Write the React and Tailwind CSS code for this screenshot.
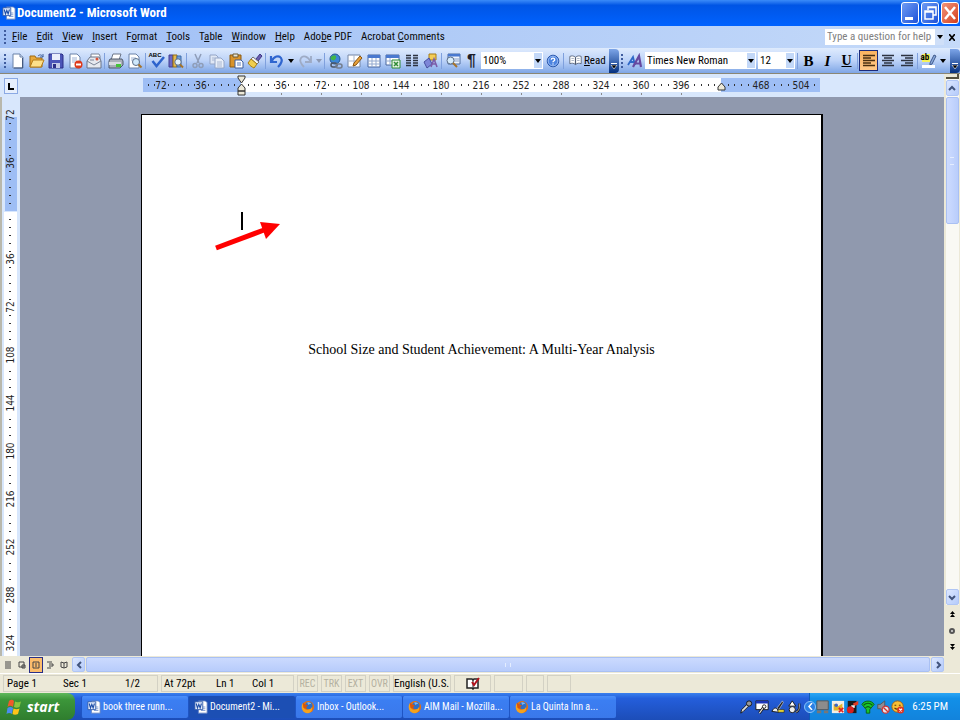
import React from "react";

const SANS = "font-['Roboto_Condensed','Roboto','Liberation_Sans',sans-serif]";

function Svg({ children, size = 16 }) {
  return (
    <svg width={size} height={size} viewBox="0 0 16 16" fill="none" aria-hidden="true" className="shrink-0">
      {children}
    </svg>
  );
}

const sheet = <path d="M3 1h7l3 3v11H3z" fill="#fff" stroke="#6b82a8" />;

const icons = {
  blank: <>{sheet}<path d="M10 1v3h3" stroke="#6b82a8" fill="#cfdcf2" /><path d="M12.500 5v10H4" stroke="#44597e" /></>,
  open: <><path d="M1 3h5l1 2h6v9H1z" fill="#e9a93a" stroke="#a06a10" /><path d="M4 7h11l-3 7H1z" fill="#fde08a" stroke="#b57c18" /><path d="M9 3c2-2 4-1 5 1m0-3v3h-3" stroke="#3c5e9c" /></>,
  save: <><path d="M1 1h13l1 1v13H1z" fill="#4b55b8" stroke="#2c2f86" /><path d="M4 1h8v6H4z" fill="#e9edfb" /><path d="M4 10h8v5H4z" fill="#c4cbe8" /><path d="M5 11h3v4H5z" fill="#2c2f86" /></>,
  permission: <>{sheet}<path d="M5 5h5M5 7h5M5 9h3" stroke="#9fb2d4" /><circle cx="11.500" cy="11.500" r="4" fill="#dd3a1c" /><path d="M9 11.500h5" stroke="#fff" strokeWidth="2" /></>,
  mail: <><path d="M5 1h8l1 2v6H5z" fill="#fff" stroke="#7c8698" /><path d="M1 8l3-4h9l2 4v7H1z" fill="#e6e9ef" stroke="#6a7488" /><path d="M1 8l7 4 7-4M4 7h4" stroke="#7c8698" /><circle cx="11" cy="6" r="1.500" fill="#d9533a" /></>,
  print: <><path d="M5 1h8l-2 6H3z" fill="#fff" stroke="#6b7587" /><path d="M2 6h12l1 2v4l-3 3H1V8z" fill="#aab0ba" stroke="#505a6c" /><path d="M1 9h12v3H1z" fill="#d8dbe0" /><path d="M8 11h5v3H8z" fill="#43c33a" /></>,
  preview: <><path d="M2 1h7l3 3v11H2z" fill="#fff" stroke="#6b82a8" /><path d="M4 5h5M4 7h4" stroke="#9fb2d4" /><circle cx="9" cy="9" r="3.500" fill="#cfe8fb" stroke="#5d6f88" /><path d="M11.500 11.500l3 3" stroke="#a6742a" strokeWidth="2" /></>,
  spelling: <><path d="M3.500 8l4 5L15 4" stroke="#2d63cc" strokeWidth="2.500" /></>,
  research: <><path d="M1 2h4v12H1z" fill="#6c68c4" stroke="#413d91" /><path d="M5 2h4v12H5z" fill="#e5b94d" stroke="#906a14" /><path d="M9 3h4v11H9z" fill="#70a0dc" stroke="#3b6aa8" /><circle cx="10" cy="9" r="3.200" fill="#e2f1fc" stroke="#5d6f88" /><path d="M12 11.500l3 3" stroke="#a6742a" strokeWidth="2" /></>,
  cut: <><path d="M5 1l4 9M11 1L7 10" stroke="#8f9db8" strokeWidth="1.500" /><circle cx="5" cy="12.500" r="2" stroke="#8f9db8" strokeWidth="1.500" /><circle cx="11" cy="12.500" r="2" stroke="#8f9db8" strokeWidth="1.500" /></>,
  copy: <><path d="M1 2h6l2 2v7H1z" fill="#dfe7f5" stroke="#94a5c6" /><path d="M6 5h6l3 3v7H6z" fill="#e9eff9" stroke="#94a5c6" /><path d="M8 9h5M8 11h5M8 13h5M3 5h3M3 7h3" stroke="#a8b6d1" /></>,
  paste: <><path d="M2 2h11v12H2z" fill="#d9932a" stroke="#8b5a10" /><path d="M5 1h5v3H5z" fill="#e9e4d3" stroke="#6d5a33" /><path d="M7 7h6l2 2v6H7z" fill="#fff" stroke="#3e5f9d" /><path d="M9 10h4M9 12h4" stroke="#5d7fbd" /></>,
  painter: <><path d="M9 6l4-5 2 2-4 5z" fill="#6a5fb0" stroke="#3f3684" /><path d="M6 4l6 5-2 2-6-5z" fill="#f4f4f4" stroke="#747474" /><path d="M4 6l6 5-3 4c-2-1-4-2-6-5z" fill="#f0ce4e" stroke="#a67d12" /></>,
  undo: <path d="M2 3v6h6M2.500 8.500C5 3 10 2 12 5c2 3 0 6-3 9" stroke="#2f65cf" strokeWidth="2.200" />,
  redo: <path d="M14 3v6H8M13.500 8.500C11 3 6 2 4 5c-2 3 0 6 3 9" stroke="#9eabc5" strokeWidth="1.800" />,
  link: <><circle cx="7" cy="6" r="5" fill="#3c86d8" stroke="#23598e" /><path d="M4 3c3-2 5 0 4 2s-2 3-4 2-2-3 0-4z" fill="#41b548" /><rect x="3" y="10" width="6" height="4" rx="2" stroke="#4d5664" strokeWidth="1.500" /><rect x="8" y="11" width="6" height="4" rx="2" stroke="#747e8e" strokeWidth="1.500" /></>,
  borders: <><path d="M1 2h12v12H1z" fill="#fff" stroke="#7586a5" /><path d="M7 2v12M1 8h12" stroke="#a7b4cc" /><path d="M6 13l1-3 6-7 2 2-6 7z" fill="#e9a23b" stroke="#8a5510" /></>,
  table: <><path d="M2 2h12v12H2z" fill="#fff" stroke="#49679f" /><path d="M2 2h12v3H2z" fill="#4a79cf" /><path d="M2 8h12M2 11h12M6 5v9M10 5v9" stroke="#93a9cf" /></>,
  excel: <><path d="M1 2h13v10H1z" fill="#fff" stroke="#49679f" /><path d="M1 2h13v3H1z" fill="#4a79cf" /><path d="M1 8h13M5 5v7" stroke="#93a9cf" /><path d="M7 7h8v8H7z" fill="#e7f5e4" stroke="#2f8a34" /><path d="M9 9l4 4M13 9l-4 4" stroke="#2f8a34" strokeWidth="1.500" /></>,
  columns: <path d="M2 2.500h5M2 5h5M2 7.500h5M2 10h5M2 12.500h5M9 2.500h5M9 5h5M9 7.500h5M9 10h5M9 12.500h5" stroke="#2d3340" strokeWidth="1.600" />,
  drawing: <><path d="M6 1h7v6H6z" fill="#f4cd56" stroke="#a57c18" /><path d="M1 9l5-4 3 6-5 4z" fill="#7d86d8" stroke="#474f9e" /><path d="M8 14l3-8 3 8M9 11h4" stroke="#7b5ca8" strokeWidth="1.600" /></>,
  docmap: <><path d="M3 1h12v10H3z" fill="#eef4fd" stroke="#4e6c9e" /><path d="M3 1h12v2.500H3z" fill="#4a79cf" /><path d="M9 6h5M9 8h5" stroke="#8aa1c9" /><circle cx="5.500" cy="7.500" r="3.500" fill="#d7ecfb" stroke="#5d6f88" /><path d="M8 10l4 4" stroke="#a6742a" strokeWidth="2" /></>,
  help: <><circle cx="8" cy="8" r="5.800" fill="#4d84e0" stroke="#2a57ab" /><circle cx="8" cy="8" r="4.800" stroke="#a9c6f5" strokeWidth=".8" /><path d="M6.300 6.800c0-2.300 3.400-2.300 3.400 0 0 1.200-1.700 1.200-1.700 2.400M8 10.500v1" stroke="#fff" strokeWidth="1.400" /></>,
  read: <><path d="M8 4C6 2 3 2 1 3v9c2-1 5-1 7 1 2-2 5-2 7-1V3c-2-1-5-1-7 1z" fill="#fff" stroke="#4e5a70" /><path d="M8 4v9" stroke="#4e5a70" strokeWidth="1.500" /><path d="M3 5.500h3M3 8h3M13 5.500h-3M13 8h-3" stroke="#9aa5ba" /></>,
  styles: <><path d="M1 12L6 4l2 8M3 9h4" stroke="#2f69c8" strokeWidth="1.800" /><path d="M6 14l6-11 2 11M8 10.500h5" stroke="#67489f" strokeWidth="2.200" /></>,
  left: <path d="M2 2.500h12M2 5h8M2 7.500h12M2 10h8M2 12.500h12" stroke="#4a2f10" strokeWidth="1.400" />,
  center: <path d="M2 2.500h12M4 5h8M2 7.500h12M4 10h8M2 12.500h12" stroke="#2d3340" strokeWidth="1.400" />,
  right: <path d="M2 2.500h12M6 5h8M2 7.500h12M6 10h8M2 12.500h12" stroke="#2d3340" strokeWidth="1.400" />,
  highlight: <><path d="M1 1h8v8H1z" fill="#f5f25a" /><path d="M9 10l4-8 2 1-4 8-2 1z" fill="#8aa9dd" stroke="#40598a" /><path d="M1 12h13v3H1z" fill="#fff" /></>,
  word: <><path d="M5 1h8l2 2v12H5z" fill="#fff" stroke="#5d7fc2" /><path d="M8 8h5M8 10h5M8 12h5" stroke="#7c98cf" /><path d="M1 2h9v9H1z" fill="#e6eefc" stroke="#2b57a7" /><path d="M2.500 4l1.500 5 1.500-4 1.500 4 1.500-5" stroke="#1f4fa8" strokeWidth="1.300" /></>,
  firefox: <><circle cx="8" cy="8" r="7" fill="#e8720c" /><circle cx="9" cy="6.500" r="4.200" fill="#2d6fc7" /><path d="M7 3c2-1 4 0 5 2-2-1-3 0-3 1z" fill="#7fb6ee" /><path d="M2 3c0 5 2 8 5 8s5-1 5-3c2 4-1 7-5 7-5 0-8-6-5-12z" fill="#f5a21d" /><path d="M2 3l3 2 3 1-2 2 1 2-4-1z" fill="#d8550b" /></>,
};

function Icon({ name, size }) {
  return <Svg size={size}>{icons[name]}</Svg>;
}

function Tool({ name, label, children }) {
  return (
    <button aria-label={label || name} className="flex h-5 w-[19px] shrink-0 items-center justify-center">
      {name ? <Icon name={name} /> : children}
    </button>
  );
}

function Sep() {
  return (
    <span className="flex w-[3px] shrink-0 justify-center">
      <span className="h-4 w-px bg-[#7fa0dd]" />
    </span>
  );
}

function Caret({ faded }) {
  return (
    <svg width="6" height="4" viewBox="0 0 6 4" aria-hidden="true" className="shrink-0">
      <path d="M0 0h6L3 4z" fill={faded ? "#8c99b3" : "#000"} />
    </svg>
  );
}

function DropArrow({ faded, label }) {
  return (
    <button aria-label={label} className="flex h-5 w-[9px] shrink-0 items-center justify-center">
      <Caret faded={faded} />
    </button>
  );
}

function Grip() {
  return (
    <span className="flex w-1 shrink-0 flex-col gap-[2px]">
      {[0, 1, 2, 3].map((i) => (
        <span key={i} className="size-[2px] bg-[#3f5c9e]" />
      ))}
    </span>
  );
}

function Combo({ label, value, width }) {
  return (
    <span className={`relative flex h-[17px] shrink-0 bg-white ${width}`}>
      <select aria-label={label} defaultValue={value} className="w-full appearance-none bg-transparent pl-[2px] text-[11px] leading-[17px] text-black outline-none">
        <option>{value}</option>
      </select>
      <span className="pointer-events-none absolute inset-y-px right-px flex w-2 items-center justify-center bg-[#c3d8f8]">
        <Caret />
      </span>
    </span>
  );
}

function Overflow({ label }) {
  return (
    <button aria-label={label} className="flex h-6 w-[10px] shrink-0 flex-col items-center justify-end gap-px rounded-r bg-gradient-to-b from-[#7da5e8] to-[#03307f] pb-[3px]">
      <span className="h-px w-[6px] bg-white" />
      <svg width="8" height="5" viewBox="0 0 8 5" aria-hidden="true"><path d="M1 0h6L4 4z" fill="#000" stroke="#fff" strokeWidth=".6" /></svg>
    </button>
  );
}

const menus = [
  ["", "F", "ile"], ["", "E", "dit"], ["", "V", "iew"], ["", "I", "nsert"], ["F", "o", "rmat"], ["", "T", "ools"],
  ["T", "a", "ble"], ["", "W", "indow"], ["", "H", "elp"], ["Ado", "b", "e PDF"], ["Acrobat ", "C", "omments"],
];

function TitleBar() {
  return (
    <header className="flex h-[26px] shrink-0 items-center bg-gradient-to-b from-[#3a8bf8] via-[#0055e5] via-20% to-[#0062ff] pl-[2px] pr-px">
      <Icon name="word" size={14} />
      <h1 className="ml-px text-[13px] font-bold leading-4 text-white">Document2 - Microsoft Word</h1>
      <div className="ml-auto flex gap-[2px]">
        <button aria-label="Minimize" className="flex h-[22px] w-[18px] items-end rounded-[3px] border border-white bg-gradient-to-br from-[#6f9bf3] to-[#1f50d8] p-[3px]">
          <span className="h-[3px] w-2 bg-white" />
        </button>
        <button aria-label="Restore" className="flex h-[22px] w-[18px] items-center justify-center rounded-[3px] border border-white bg-gradient-to-br from-[#6f9bf3] to-[#1f50d8]">
          <svg width="13" height="16" viewBox="0 0 13 16" fill="none" stroke="#fff" strokeWidth="1.500"><path d="M4 5V2h8v8H9M4 2.500h8" /><path d="M1 6h8v8H1zM1 7h8" /></svg>
        </button>
        <button aria-label="Close" className="flex h-[22px] w-[18px] items-center justify-center rounded-[3px] border border-white bg-gradient-to-br from-[#f0937a] to-[#d43a12]">
          <svg width="12" height="14" viewBox="0 0 12 14" stroke="#fff" strokeWidth="2.500"><path d="M1 1l10 12M11 1L1 13" /></svg>
        </button>
      </div>
    </header>
  );
}

function MenuBar() {
  return (
    <nav className="flex h-[22px] shrink-0 items-center bg-gradient-to-r from-[#9ebef5] to-[#c5daf9] pl-1 pr-[5px]">
      <Grip />
      <div className="ml-1 flex gap-[9px]">
        {menus.map(([a, u, b]) => (
          <button key={a + u + b} className="whitespace-pre text-[11px] leading-4 text-[#0a0a0a]">
            {a}<u>{u}</u>{b}
          </button>
        ))}
      </div>
      <label className="ml-auto flex h-4 items-center bg-white">
        <input aria-label="Ask a question" placeholder="Type a question for help" className="w-[110px] bg-transparent pl-[2px] text-[11px] leading-4 outline-none placeholder:text-[#808080]" />
        <span className="flex h-4 w-[9px] items-center justify-center bg-[#cfdff8]"><Caret /></span>
      </label>
      <button aria-label="Close document" className="ml-[5px]">
        <svg width="6" height="7" viewBox="0 0 6 7" stroke="#000" strokeWidth="1.700"><path d="M0 0l6 7M6 0L0 7" /></svg>
      </button>
    </nav>
  );
}

function ToolBars() {
  return (
    <div className="flex h-[26px] shrink-0 items-center border-b border-[#8a8674] bg-gradient-to-b from-[#dfebfd] via-[#bdd3f8] to-[#7fa6e6] pl-1">
      <Grip />
      <Tool name="blank" /><Tool name="open" /><Tool name="save" /><Tool name="permission" /><Tool name="mail" />
      <Sep /><Tool name="print" /><Tool name="preview" />
      <Sep />
      <Tool label="spelling">
        <span className="relative flex">
          <Icon name="spelling" />
          <span className="absolute -top-px left-0 font-['Liberation_Sans',sans-serif] text-[6px] font-bold leading-[6px] text-black">ABC</span>
        </span>
      </Tool>
      <Tool name="research" />
      <Sep /><Tool name="cut" /><Tool name="copy" /><Tool name="paste" /><Tool name="painter" />
      <Sep /><Tool name="undo" /><DropArrow label="undo list" /><Tool name="redo" /><DropArrow faded label="redo list" />
      <Sep /><Tool name="link" /><Tool name="borders" /><Tool name="table" /><Tool name="excel" /><Tool name="columns" /><Tool name="drawing" />
      <Sep /><Tool name="docmap" />
      <Tool label="show formatting"><span className="font-['Liberation_Sans',sans-serif] text-[16px] font-bold leading-5 text-[#1c1c28]">¶</span></Tool>
      <Combo label="Zoom" value="100%" width="w-[62px]" />
      <Tool name="help" />
      <Sep />
      <button className="ml-px flex w-[43px] shrink-0 items-center gap-[2px] pl-[3px] text-[11px] leading-4 text-black">
        <Icon name="read" size={13} />
        <span><u>R</u>ead</span>
      </button>
      <div className="flex min-w-0 flex-1 items-center">
        <Overflow label="standard options" />
        <span className="ml-[2px] flex"><Grip /></span>
        <Tool name="styles" />
        <span className="ml-px flex gap-[2px] pr-px">
          <Combo label="Font" value="Times New Roman" width="w-[111px]" />
          <Combo label="Font size" value="12" width="w-[37px]" />
        </span>
        <Sep />
        <Tool label="bold"><b className="font-['Liberation_Serif',serif] text-[15px] leading-5">B</b></Tool>
        <Tool label="italic"><i className="font-['Liberation_Serif',serif] text-[15px] font-bold leading-5">I</i></Tool>
        <Tool label="underline"><u className="font-['Liberation_Serif',serif] text-[14px] font-bold leading-5">U</u></Tool>
        <Sep />
        <button aria-label="align left" className="flex h-[21px] w-[19px] shrink-0 items-center justify-center border border-[#1b2a7a] bg-gradient-to-b from-[#fdb45f] to-[#fec888]">
          <Icon name="left" />
        </button>
        <Tool name="center" /><Tool name="right" />
        <Sep />
        <Tool label="highlight">
          <span className="relative flex">
            <Icon name="highlight" />
            <span className="absolute left-0 top-0 text-[9px] font-bold leading-[9px] text-black">ab</span>
          </span>
        </Tool>
        <DropArrow label="highlight colours" />
        <span className="ml-auto flex"><Overflow label="formatting options" /></span>
      </div>
    </div>
  );
}

const H_STEP = 40;
const V_STEP = 48;

function HorizontalRuler() {
  const labels = [];
  for (let n = -2; n <= 14; n++) if (n !== 0 && n !== 12) labels.push(n);
  const dots = [];
  for (let k = -14; k <= 86; k++) {
    const n = Math.round(k / 6);
    const near = Math.abs(k - n * 6);
    const wide = Math.abs(n) * 36 >= 100 && n !== 12;
    if (near === 0 || (wide && near === 1)) continue;
    dots.push(Math.round(100 + (k * H_STEP) / 6));
  }
  return (
    <svg width="682" height="22" viewBox="0 0 682 22" className="shrink-0" aria-label="Horizontal ruler">
      <rect x="2" y="4" width="98" height="14" fill="#9ebef5" />
      <rect x="100" y="4" width="480" height="14" fill="#fff" />
      <rect x="580" y="4" width="99" height="14" fill="#9ebef5" />
      {dots.map((x) => <rect key={x} x={x} y="10" width="1" height="2" fill="#333" />)}
      {labels.map((n) => (
        <text key={n} x={100 + n * H_STEP} y="15" fontSize="10" textAnchor="middle" fill="#222" className="font-['DejaVu_Sans_Condensed','Liberation_Sans',sans-serif]">
          {Math.abs(n) * 36}
        </text>
      ))}
      {[1, 2, 3, 4, 5, 6, 7, 8, 9, 10, 11].map((n) => <rect key={n} x={100 + n * H_STEP} y="19" width="1" height="2" fill="#8a8a8a" />)}
      <g fill="#ece9d8" stroke="#333">
        <path d="M97 2h7v2l-3.500 5L97 4z" />
        <path d="M97 17v-3l3.500-4 3.500 4v3zM97 17h7v4h-7z" />
        <path d="M577 16v-3l3.500-4 3.500 4v3z" />
      </g>
    </svg>
  );
}

function VerticalRuler() {
  const labels = [-2, -1, 1, 2, 3, 4, 5, 6, 7, 8, 9];
  const dots = [];
  for (let k = -11; k <= 55; k++) {
    const n = Math.round(k / 6);
    const near = Math.abs(k - n * 6);
    if (near === 0 || (Math.abs(n) >= 3 && near === 1)) continue;
    dots.push(114 + k * 8);
  }
  return (
    <svg width="20" height="559" viewBox="0 0 20 559" className="block" aria-label="Vertical ruler">
      <rect x="5" y="20" width="12" height="94" fill="#9ebef5" />
      <rect x="4" y="115" width="13" height="444" fill="#fff" />
      {dots.map((y) => <rect key={y} x="9" y={y} width="2" height="1" fill="#333" />)}
      {labels.map((n) => {
        const y = 114 + n * V_STEP;
        return (
          <text key={n} x="14" y={y} fontSize="10" textAnchor="middle" fill="#222" transform={`rotate(-90 14 ${y})`} className="font-['DejaVu_Sans_Condensed','Liberation_Sans',sans-serif]">
            {Math.abs(n) * 36}
          </text>
        );
      })}
    </svg>
  );
}

const CHEVRONS = { up: "M1 6l3-3 3 3", down: "M1 3l3 3 3-3", left: "M6 1L3 4l3 3", right: "M3 1l3 3-3 3" };

function ScrollButton({ dir, className }) {
  return (
    <button aria-label={`Scroll ${dir}`} className={`flex shrink-0 items-center justify-center rounded-[2px] border border-[#b0c6f5] bg-gradient-to-br from-[#dce7ff] to-[#b5cbfb] ${className}`}>
      <svg width="8" height="8" viewBox="0 0 8 8" fill="none" stroke="#41547c" strokeWidth="2"><path d={CHEVRONS[dir]} /></svg>
    </button>
  );
}

function VerticalScroll() {
  return (
    <aside className="flex w-4 shrink-0 flex-col items-center bg-[#ece9d8]">
      <span className="h-[5px] w-[13px] border-b-2 border-r-2 border-[#55513f] bg-[#ece9d8]" />
      <div className="flex w-[13px] flex-1 flex-col bg-[#f9f9f4] pt-px">
        <ScrollButton dir="up" className="h-4 w-[13px]" />
        <span className="mt-px flex h-[127px] w-[13px] items-center justify-center rounded-[2px] border border-[#a9c0f3] bg-gradient-to-r from-[#cddbff] to-[#b9cdfb]">
          <span className="h-2 w-1 border-y border-[#e4edff]" />
        </span>
        <span className="flex-1" />
        <ScrollButton dir="down" className="h-4 w-[13px]" />
      </div>
      <button aria-label="Previous page" className="flex h-[18px] items-center">
        <svg width="5" height="7" viewBox="0 0 5 7"><path d="M2.500 0L5 3H0zM2.500 3L5 6H0z" fill="#000" /></svg>
      </button>
      <button aria-label="Select browse object" className="flex h-4 items-center">
        <span className="size-[6px] rounded-full border-2 border-[#555] bg-[#ddd]" />
      </button>
      <button aria-label="Next page" className="flex h-[17px] items-center">
        <svg width="5" height="7" viewBox="0 0 5 7"><path d="M0 0h5L2.500 3zM0 3h5L2.500 6z" fill="#000" /></svg>
      </button>
    </aside>
  );
}

function DocumentView() {
  return (
    <div className="flex min-h-0 flex-1 flex-col overflow-hidden">
      <div className="flex h-[23px] shrink-0 bg-[#d8e7fc]">
        <div className="w-5 shrink-0 pl-1 pt-1">
          <button aria-label="Tab selector" className="flex h-4 w-[14px] items-center justify-center border border-[#8aa9e4] bg-[#e6effd]">
            <svg width="6" height="7" viewBox="0 0 6 7"><path d="M1 0v6h5" stroke="#000" strokeWidth="2" fill="none" /></svg>
          </button>
        </div>
        <div className="flex flex-1 justify-center"><HorizontalRuler /></div>
      </div>
      <div className="flex min-h-0 flex-1">
        <div className="w-5 shrink-0 overflow-hidden border-l-2 border-[#b9b8ac] bg-[#d8e7fc]">
          <div className="-ml-[2px]"><VerticalRuler /></div>
        </div>
        <main className="flex flex-1 justify-center overflow-hidden bg-[#9099ae] pt-[17px]">
          <article className="relative w-[682px] shrink-0 border-l border-r-2 border-t border-black bg-white px-[99px] pt-[97px] font-['Liberation_Serif',serif] text-black">
            <span className="block h-[18px] w-[2px] bg-black" />
            <p className="mt-[110px] text-center text-[14px] leading-5">School Size and Student Achievement: A Multi-Year Analysis</p>
            <svg width="68" height="32" viewBox="0 0 68 32" className="absolute left-[72px] top-[105px]" aria-hidden="true">
              <path d="M2 28L50 10" stroke="#f00" strokeWidth="5" />
              <path d="M46 2l20 2-14 15z" fill="#f00" />
            </svg>
          </article>
        </main>
      </div>
    </div>
  );
}

const viewIcons = [
  ["Normal view", "M1 1h6M1 3h6M1 5h6M1 7h6"],
  ["Web layout view", "M1 1h5v5H1zM4 4h3v3H4z"],
  ["Print layout view", "M1 1h6v6H1zM3 3h2M3 5h2"],
  ["Outline view", "M1 1h5M3 3h4v2H3M1 7h4"],
  ["Reading layout", "M4 2L1 1v5l3 1 3-1V1zM4 2v5"],
];

function HorizontalScroll() {
  return (
    <div className="flex h-[17px] shrink-0 items-center bg-[#ece9d8] pl-[1px] pr-4">
      {viewIcons.map(([label, d], i) => (
        <button key={label} aria-label={label} className={`flex h-4 w-[14px] shrink-0 items-center justify-center ${i === 2 ? "border border-[#2a2f86] bg-[#fcbd6c]" : ""}`}>
          <svg width="8" height="8" viewBox="0 0 8 8" fill="none" stroke="#444"><path d={d} /></svg>
        </button>
      ))}
      <ScrollButton dir="left" className="ml-px h-[15px] w-[13px]" />
      <span className="mx-px flex h-[15px] flex-1 items-center justify-center rounded-[2px] border border-[#a9c0f3] bg-gradient-to-b from-[#cbdafe] to-[#b8ccfb]">
        <span className="h-1 w-[6px] border-x border-[#e4edff]" />
      </span>
      <ScrollButton dir="right" className="h-[15px] w-[13px]" />
    </div>
  );
}

function Pane({ className, children }) {
  return <div className={`flex h-[17px] shrink-0 items-center whitespace-nowrap border border-[#d3d1c4] ${className}`}>{children}</div>;
}

function StatusBar() {
  return (
    <footer className="flex h-5 shrink-0 items-center gap-[3px] border-t border-white bg-[#ece9d8] pl-[3px] text-[11px] leading-4 text-black">
      <Pane className="w-[155px] pl-[3px]">
        <span className="w-14">Page 1</span><span className="w-[62px]">Sec 1</span><span>1/2</span>
      </Pane>
      <Pane className="w-[133px] pl-[2px]">
        <span className="w-[52px]">At 72pt</span><span className="w-9">Ln 1</span><span>Col 1</span>
      </Pane>
      {["REC", "TRK", "EXT", "OVR"].map((t) => (
        <Pane key={t} className="w-[21px] justify-center text-[10px] text-[#b4b1a1]">{t}</Pane>
      ))}
      <Pane className="w-[58px]">English (U.S.</Pane>
      <Pane className="w-[37px] justify-center">
        <svg width="14" height="13" viewBox="0 0 14 13" aria-hidden="true"><path d="M1 2h5l1 1 1-1h4v9H8l-1 1-1-1H1z" fill="#fff" stroke="#222" strokeWidth="1.500" /><path d="M7 3v8" stroke="#222" /><path d="M6 5l2 3 5-7" stroke="#b3131d" strokeWidth="2" fill="none" /></svg>
      </Pane>
      <Pane className="w-[29px]" /><Pane className="w-[18px]" /><Pane className="w-6" />
    </footer>
  );
}

const tasks = [
  ["word", "book three runn..."], ["word", "Document2 - Mi..."], ["firefox", "Inbox - Outlook..."],
  ["firefox", "AIM Mail - Mozilla..."], ["firefox", "La Quinta Inn a..."],
];

const trayIcons = [
  ["Display", <><path d="M1 1h13v10H1z" fill="#8c8c8c" stroke="#555" /><path d="M1 12h5v3H1zM9 12h5v3H9z" fill="#777" /></>],
  ["Messenger", <><path d="M1 1h14v14H1z" fill="#f3efe6" /><path d="M3 4l5 3 5-3v8H3z" fill="#e0b32b" /><circle cx="6" cy="6" r="2" fill="#3c66c4" /><path d="M9 9l5 5M14 9l-5 5" stroke="#e02020" strokeWidth="2" /></>],
  ["Antivirus", <><path d="M2 1h10v14H2z" fill="#1c1c1c" /><path d="M8 4l6-3v4l-5 2z" fill="#e23a24" /><path d="M6 6h4v3H6z" fill="#eee" /><circle cx="5" cy="11" r="4" fill="#d81f1f" /></>],
  ["Wireless", <><path d="M1 5c3-5 11-5 14 0l-5 6v4H6v-4z" fill="#18c52b" stroke="#0a5c12" /><path d="M3 6c3-3 7-3 10 0M5 9c2-2 4-2 6 0" stroke="#0a5c12" strokeWidth="1.300" /></>],
  ["Volume", <><path d="M2 5h3l5-4v13l-5-4H2z" fill="#8c8c96" stroke="#555" /><circle cx="11" cy="11" r="4" fill="#e6e6ea" stroke="#d03030" strokeWidth="1.500" /><path d="M8.500 8.500l5 5" stroke="#d03030" strokeWidth="1.500" /></>],
  ["Security alert", <><circle cx="7.500" cy="7.500" r="6.500" fill="#f6bf36" stroke="#a35d0d" /><path d="M4 6h2M9 6h2M4 9c2 2 4 2 6 0" stroke="#5e3608" strokeWidth="1.300" /><circle cx="11" cy="11.500" r="4" fill="#df3522" /><path d="M9.500 10l3 3M12.500 10l-3 3" stroke="#fff" strokeWidth="1.500" /></>],
];

const quickIcons = [
  ["Microphone", <><path d="M2 15l1-4 6-6 2 2-6 6z" fill="#ddd" stroke="#111" /><circle cx="11.500" cy="4" r="3" fill="#999" stroke="#111" /></>],
  ["Tools", <><path d="M1 1h14v10H1z" fill="#fff" stroke="#111" /><path d="M1 1h14v3H1z" fill="#1a34b8" /><path d="M5 15l5-7" stroke="#111" strokeWidth="3" /><path d="M5 15l5-7" stroke="#ddd" strokeWidth="1.400" /><circle cx="10.500" cy="7.500" r="2" fill="#fff" stroke="#111" /></>],
  ["Handwriting", <><path d="M7 9l6-8 1 2-5 8z" fill="#222" stroke="#ddd" strokeWidth=".7" /><path d="M1 13c3-6 5-3 6-3l2 4z" fill="#eee" stroke="#111" /><path d="M8 11h7v3H8z" fill="#f2dd37" stroke="#111" strokeWidth=".6" /></>],
  ["Drawing Pad", <><path d="M2 7l4-6 4 6z" fill="#fff" stroke="#111" /><circle cx="6" cy="11" r="3.500" fill="#eee" stroke="#111" /><path d="M10 14c5-2 4-6 4-10" stroke="#111" strokeWidth="2.500" /><path d="M10 14c5-2 4-6 4-10" stroke="#ccc" /></>],
];

function Taskbar() {
  return (
    <div className="flex h-[27px] shrink-0 items-stretch bg-gradient-to-b from-[#3a80ee] via-[#245edb] via-20% to-[#1c4db8] text-[11px] leading-4 text-white">
      <button className="flex w-[75px] shrink-0 items-center gap-1 rounded-r-[8px] bg-gradient-to-b from-[#5fb85c] via-[#3c963a] via-25% to-[#2f7d2e] pl-[6px]">
        <svg width="17" height="18" viewBox="0 0 17 18" aria-hidden="true">
          <path d="M3 3c2-2 4-1 5 0L7 9C5 7 3 8 1.500 9z" fill="#f1592a" />
          <path d="M9 3.500c2 1 4 1 6 0L13.500 9c-2 1-4 1-5.500 0z" fill="#8cc63f" />
          <path d="M1.500 10c2-1.500 4-1 5.500 0l-1 6c-2-1.500-4-1-5.500 0z" fill="#4a8cf0" />
          <path d="M7.500 10.500c2 1 4 1 6 0L12 16c-2 1-4 1-5.500 0z" fill="#fcc419" />
        </svg>
        <span className="font-['Open_Sans',sans-serif] text-[14px] font-bold italic leading-5">start</span>
      </button>
      <div className="flex flex-1 items-center pl-[6px]">
        {tasks.map(([icon, label], i) => (
          <button key={label} className={`flex h-[22px] w-[107px] items-center gap-[2px] overflow-hidden whitespace-nowrap rounded-[2px] border-l border-[#1f55c4] pl-[5px] text-[10px] ${i === 1 ? "bg-[#1c4fb4]" : "bg-gradient-to-b from-[#4b8ffa] via-[#3b7ef2] via-20% to-[#3a78ea]"}`}>
            <Icon name={icon} size={14} />{label}
          </button>
        ))}
      </div>
      <div className="flex shrink-0 items-center gap-[2px] pr-2">
        {quickIcons.map(([label, art]) => <button key={label} aria-label={label}><Svg size={14}>{art}</Svg></button>)}
      </div>
      <div className="relative flex shrink-0 items-center gap-px border-l border-[#0b5bb8] bg-gradient-to-b from-[#2aa6f4] via-[#1290e8] via-20% to-[#1283dc] pl-[6px] pr-3">
        <button aria-label="Show hidden icons" className="absolute -left-[6px] flex size-3 items-center justify-center rounded-full border border-[#8cc4fa] bg-[#2a7fe4]">
          <svg width="5" height="7" viewBox="0 0 5 7" fill="none" stroke="#fff" strokeWidth="1.500"><path d="M4 0L1 3.500 4 7" /></svg>
        </button>
        {trayIcons.map(([label, art]) => <button key={label} aria-label={label}><Svg size={14}>{art}</Svg></button>)}
        <time className="ml-[6px] whitespace-nowrap">6:25 PM</time>
      </div>
    </div>
  );
}

export default function App() {
  return (
    <div className={`flex h-screen flex-col overflow-hidden bg-[#ece9d8] ${SANS}`}>
      <TitleBar />
      <MenuBar />
      <ToolBars />
      <div className="flex min-h-0 flex-1">
        <DocumentView />
        <VerticalScroll />
      </div>
      <HorizontalScroll />
      <StatusBar />
      <Taskbar />
    </div>
  );
}
